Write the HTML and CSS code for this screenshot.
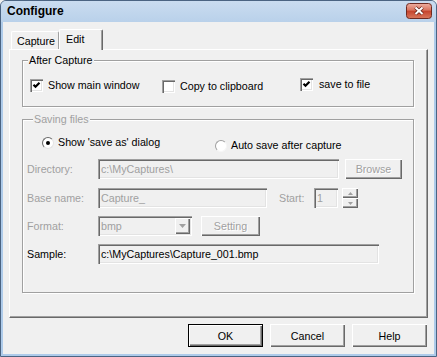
FILE: index.html
```html
<!DOCTYPE html>
<html lang="en">
<head>
    <meta charset="UTF-8">
    <title>Configure</title>
    <link rel="stylesheet" href="styles.css">
</head>
<body>
<div class="window">
    <div class="titlebar">
        <span class="title">Configure</span>
        <span class="close-btn">
            <svg width="26" height="16" viewBox="0 0 26 16">
                <defs>
                    <linearGradient id="cg" x1="0" y1="0" x2="0" y2="1">
                        <stop offset="0" stop-color="#eeb0a2"/>
                        <stop offset="0.45" stop-color="#d8735e"/>
                        <stop offset="0.5" stop-color="#c5432d"/>
                        <stop offset="1" stop-color="#d9785d"/>
                    </linearGradient>
                </defs>
                <rect x="0.5" y="0.5" width="25" height="15" rx="3" fill="url(#cg)" stroke="#6e2a22"/>
                <path d="M9.5 4.5 L16.5 11 M16.5 4.5 L9.5 11" stroke="#5b1c14" stroke-width="3.4"/>
                <path d="M9.5 4.5 L16.5 11 M16.5 4.5 L9.5 11" stroke="#ffffff" stroke-width="2"/>
            </svg>
        </span>
    </div>
    <div class="frame">
        <div class="tabs">
            <div class="tab">Capture</div>
            <div class="tab active">Edit</div>
        </div>
        <div class="panel">
            <!-- After Capture -->
            <div class="group group-after">
                <div class="group-title">After Capture</div>
                <div class="check-row">
                    <div class="check item-show">
                        <span class="box"><svg width="9" height="9" viewBox="0 0 9 9"><polyline points="1.5,3.8 3.5,5.8 7.5,1.8" fill="none" stroke="#000" stroke-width="2.2"/></svg></span>
                        Show main window
                    </div>
                    <div class="check item-clip">
                        <span class="box"></span>
                        Copy to clipboard
                    </div>
                    <div class="check item-file">
                        <span class="box"><svg width="9" height="9" viewBox="0 0 9 9"><polyline points="1.5,3.8 3.5,5.8 7.5,1.8" fill="none" stroke="#000" stroke-width="2.2"/></svg></span>
                        save to file
                    </div>
                </div>
            </div>

            <!-- Saving files -->
            <div class="group group-saving">
                <div class="group-title disabled">Saving files</div>
                <div class="radio-row">
                    <div class="radio item-dialog">
                        <span class="ring selected"><span class="dot"></span></span>
                        Show 'save as' dialog
                    </div>
                    <div class="radio item-auto">
                        <span class="ring"></span>
                        Auto save after capture
                    </div>
                </div>
                <div class="form-rows">
                    <div class="form-row row-dir">
                        <span class="field-label disabled">Directory:</span>
                        <div class="textbox disabled w-dir">c:\MyCaptures\</div>
                        <div class="btn disabled btn-browse">Browse</div>
                    </div>
                    <div class="form-row">
                        <span class="field-label disabled">Base name:</span>
                        <div class="textbox disabled w-base">Capture_</div>
                        <span class="start-label disabled">Start:</span>
                        <div class="textbox disabled w-start">1</div>
                        <div class="spinner">
                            <span class="spin-btn"><svg width="5" height="3" viewBox="0 0 5 3"><path d="M2.5 0 L5 3 L0 3 Z" fill="#a0a0a0"/></svg></span>
                            <span class="spin-btn"><svg width="5" height="3" viewBox="0 0 5 3"><path d="M0 0 L5 0 L2.5 3 Z" fill="#a0a0a0"/></svg></span>
                        </div>
                    </div>
                    <div class="form-row">
                        <span class="field-label disabled">Format:</span>
                        <div class="textbox disabled select w-format">
                            <span>bmp</span>
                            <span class="drop"><svg width="7" height="4" viewBox="0 0 7 4"><path d="M0 0 L7 0 L3.5 4 Z" fill="#a0a0a0"/></svg></span>
                        </div>
                        <div class="btn disabled btn-setting">Setting</div>
                    </div>
                    <div class="form-row">
                        <span class="field-label">Sample:</span>
                        <div class="textbox w-sample">c:\MyCaptures\Capture_001.bmp</div>
                    </div>
                </div>
            </div>
        </div>
        <div class="buttons">
            <div class="btn btn-dialog default">OK</div>
            <div class="btn btn-dialog">Cancel</div>
            <div class="btn btn-dialog">Help</div>
        </div>
    </div>
</div>
</body>
</html>
```

FILE: styles.css
```css
/* Page */
body {
    margin: 0;
    font-family: "Liberation Sans", Arial, sans-serif;
    font-size: 10.7px;
    color: #000;
    background: #f0f0f0;
}

/* Window frame */
.window {
    width: 437px;
    height: 357px;
    box-sizing: border-box;
    border: 1px solid #4b6482;
    border-radius: 6px 6px 0 0;
    background: #aecbea;
    display: flex;
    flex-direction: column;
    overflow: hidden;
}

.titlebar {
    height: 21px;
    display: flex;
    align-items: flex-start;
    justify-content: space-between;
    padding: 0 4px 0 6px;
    background: linear-gradient(to bottom, #cadcf0, #b9d1ea);
}

.title {
    font-weight: bold;
    font-size: 12px;
    line-height: 21px;
}

.close-btn {
    margin-top: 2px;
    display: flex;
}

.frame {
    flex: 1;
    margin: 0 2px 2px;
    padding: 7px 6px 0;
    background: #f0f0f0;
}

/* Tabs */
.tabs {
    height: 20px;
    display: flex;
    align-items: flex-end;
    padding-left: 2px;
}

.tab {
    box-sizing: border-box;
    height: 18px;
    width: 48px;
    padding: 2px 0 0 5px;
    border-top: 1px solid #fff;
    border-left: 1px solid #fff;
    border-right: 1px solid #a0a0a0;
    border-radius: 2px 2px 0 0;
    line-height: 14px;
}

.tab.active {
    position: relative;
    z-index: 1;
    height: 21px;
    width: 44px;
    margin-bottom: -1px;
    padding: 2px 0 0 6px;
    background: #f0f0f0;
    border-right: 1px solid #696969;
    box-shadow: inset -1px 0 #a0a0a0;
}

.panel {
    box-sizing: border-box;
    padding: 10px 13px 24px 12px;
    border-top: 1px solid #fff;
    border-left: 1px solid #fff;
    border-right: 1px solid #696969;
    border-bottom: 1px solid #696969;
    box-shadow: inset -1px -1px #a0a0a0;
}

/* Group boxes */
.group {
    border: 1px solid #a0a0a0;
    box-shadow: inset 1px 1px #fff, 1px 1px #fff;
}

.group-title {
    width: max-content;
    margin: -7px 0 0 5px;
    padding: 0 1px;
    line-height: 13px;
    background: #f0f0f0;
}

.group-saving {
    margin-top: 12px;
    padding: 0 0 28px 4px;
}

.group-saving .group-title {
    margin-left: 6px;
}

.disabled {
    color: #a0a0a0;
}

/* Checkboxes */
.check-row {
    display: flex;
    align-items: flex-start;
    padding: 12px 0 13px 7px;
}

.check {
    display: flex;
    align-items: center;
    gap: 5px;
    line-height: 13px;
}

.item-show { width: 132px; }
.item-clip { width: 138px; margin-top: 1px; }
.item-file { margin-top: -1px; gap: 6px; }

.box {
    box-sizing: border-box;
    width: 13px;
    height: 13px;
    background: #fff;
    display: flex;
    align-items: center;
    justify-content: center;
    box-shadow: inset 1px 1px #a0a0a0, inset 2px 2px #696969, inset -1px -1px #fff, inset -2px -2px #e3e3e3;
}

/* Radio buttons */
.radio-row {
    display: flex;
    align-items: flex-start;
    margin: 10px 0 0 15px;
    height: 23px;
}

.radio {
    display: flex;
    align-items: center;
    gap: 4px;
    line-height: 13px;
}

.item-dialog { width: 173px; }
.item-auto { margin-top: 3px; }

.ring {
    box-sizing: border-box;
    width: 12px;
    height: 12px;
    border-radius: 50%;
    background: #fff;
    border: 1px solid;
    border-color: #a0a0a0 #f6f6f6 #f6f6f6 #a0a0a0;
    display: flex;
    align-items: center;
    justify-content: center;
}

.ring.selected {
    border-color: #696969 #e3e3e3 #e3e3e3 #696969;
}

.dot {
    width: 4px;
    height: 4px;
    border-radius: 50%;
    background: #000;
}

/* Form rows */
.form-rows {
    display: flex;
    flex-direction: column;
    gap: 8px;
}

.form-row {
    display: flex;
    align-items: center;
    height: 20px;
}

.row-dir {
    margin-bottom: 1px;
}

.field-label {
    width: 71px;
}

.textbox {
    box-sizing: border-box;
    height: 20px;
    padding-left: 3px;
    line-height: 20px;
    white-space: nowrap;
    background: #f0f0f0;
    box-shadow: inset 1px 1px #a0a0a0, inset 2px 2px #696969, inset -1px -1px #fff, inset -2px -2px #e3e3e3;
}

.w-dir { width: 241px; }
.w-base { width: 169px; }
.w-start { width: 24px; }
.w-sample { width: 281px; }

.start-label {
    width: 35px;
    margin-left: 12px;
}

.spinner {
    margin-left: 4px;
    width: 16px;
    height: 20px;
    display: flex;
    flex-direction: column;
}

.spin-btn {
    flex: 1;
    display: flex;
    align-items: center;
    justify-content: center;
    box-shadow: inset 1px 1px #fff, inset -1px -1px #696969, inset -2px -2px #a0a0a0;
}

.select {
    width: 94px;
    display: flex;
    justify-content: space-between;
    align-items: center;
    padding-right: 2px;
}

.drop {
    box-sizing: border-box;
    width: 15px;
    height: 16px;
    display: flex;
    align-items: center;
    justify-content: center;
    box-shadow: inset 1px 1px #fff, inset -1px -1px #696969, inset -2px -2px #a0a0a0;
}

/* Buttons */
.btn {
    box-sizing: border-box;
    display: flex;
    align-items: center;
    justify-content: center;
    box-shadow: inset 1px 1px #fff, inset -1px -1px #696969, inset -2px -2px #a0a0a0;
}

.btn.disabled {
    text-shadow: 1px 1px #fff;
}

.btn-browse {
    width: 57px;
    height: 20px;
    margin-left: 6px;
}

.btn-setting {
    width: 59px;
    height: 20px;
    margin-left: 9px;
}

.buttons {
    display: flex;
    justify-content: flex-end;
    gap: 7px;
    margin-top: 6px;
    padding-right: 1px;
}

.btn-dialog {
    width: 75px;
    height: 23px;
}

.btn-dialog.default {
    border: 1px solid #000;
}
```
